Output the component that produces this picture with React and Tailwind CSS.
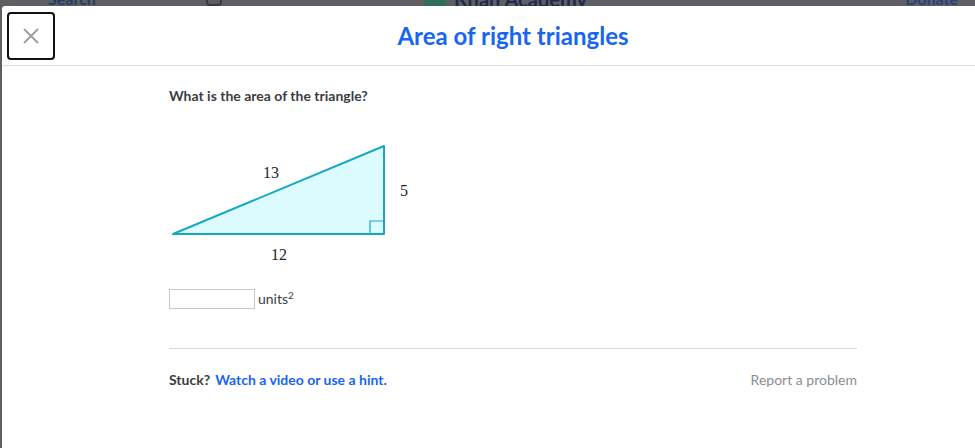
export default function App() {
  return (
    <div className="relative h-[448px] w-[975px] overflow-hidden bg-[#5f5f63] font-['Lato','Noto_Sans',sans-serif]">
      {/* dimmed page behind the modal, mostly hidden by it */}
      <div className="h-[6px] overflow-hidden">
        <div className="-mt-[11px] flex h-[20px] items-center text-[16px] font-bold text-[#263a6a]">
          <span className="ml-[48px]">Search</span>
          <span className="ml-[110px] h-[14px] w-[16px] rounded-sm border-2 border-[#3a3a40]" />
          <span className="ml-[202px] flex items-center gap-[8px] text-[20px] text-[#1e2a4a]">
            <span className="h-[16px] w-[22px] bg-[#2d6f58]" />
            Khan Academy
          </span>
          <span className="ml-auto mr-[17px] text-[#2a3f7a]">Donate</span>
        </div>
      </div>

      <div className="ml-[2px] h-[442px] w-[1022px] rounded-tl-[3px] bg-white">
        <header className="relative flex h-[60px] items-center justify-center border-b border-[#dcdcdc]">
          <button className="absolute left-[5px] top-[6px] flex h-[48px] w-[48px] items-center justify-center rounded-[4px] border-2 border-[#111]">
            <svg width="16" height="16" viewBox="0 0 16 16" stroke="#9a9da1" strokeWidth="1.8" strokeLinecap="round">
              <path d="M1.5 1.5 L14.5 14.5 M14.5 1.5 L1.5 14.5" />
            </svg>
          </button>
          <h1 className="text-[24px] font-bold text-[#1865f2]">Area of right triangles</h1>
        </header>

        <main className="ml-[167px] w-[688px] pt-[20px]">
          <p className="text-[14px] font-bold leading-[20px] text-[#3b3d42]">What is the area of the triangle?</p>

          <svg className="mt-[24px] block" width="260" height="136" viewBox="0 0 260 136">
            <polygon points="4,104 215,16 215,104" fill="#dcfbfe" stroke="#17a6c4" strokeWidth="2" strokeLinejoin="round" />
            <polyline points="201,104 201,91 215,91" fill="none" stroke="#17a6c4" strokeWidth="1.2" />
            <g fontFamily="'Liberation Serif', serif" fontSize="16" fill="#21242c" textAnchor="middle">
              <text x="102" y="48">13</text>
              <text x="235" y="66">5</text>
              <text x="110" y="130">12</text>
            </g>
          </svg>

          <div className="mt-[23px] flex items-center gap-[3px]">
            <input className="h-[20px] w-[86px] border border-[#c9c9c9] bg-white outline-none" />
            <span className="text-[14px] leading-[20px] text-[#3b3d42]">
              units<sup className="text-[10px]">2</sup>
            </span>
          </div>

          <div className="mt-[39px] border-t border-[#d6d6d6]" />

          <div className="mt-[21px] flex items-center justify-between text-[14px] leading-[20px]">
            <div className="flex gap-[5px] font-bold">
              <span className="text-[#3b3d42]">Stuck?</span>
              <a className="text-[#1865f2]">Watch a video or use a hint.</a>
            </div>
            <a className="text-[#888d93]">Report a problem</a>
          </div>
        </main>
      </div>
    </div>
  );
}
